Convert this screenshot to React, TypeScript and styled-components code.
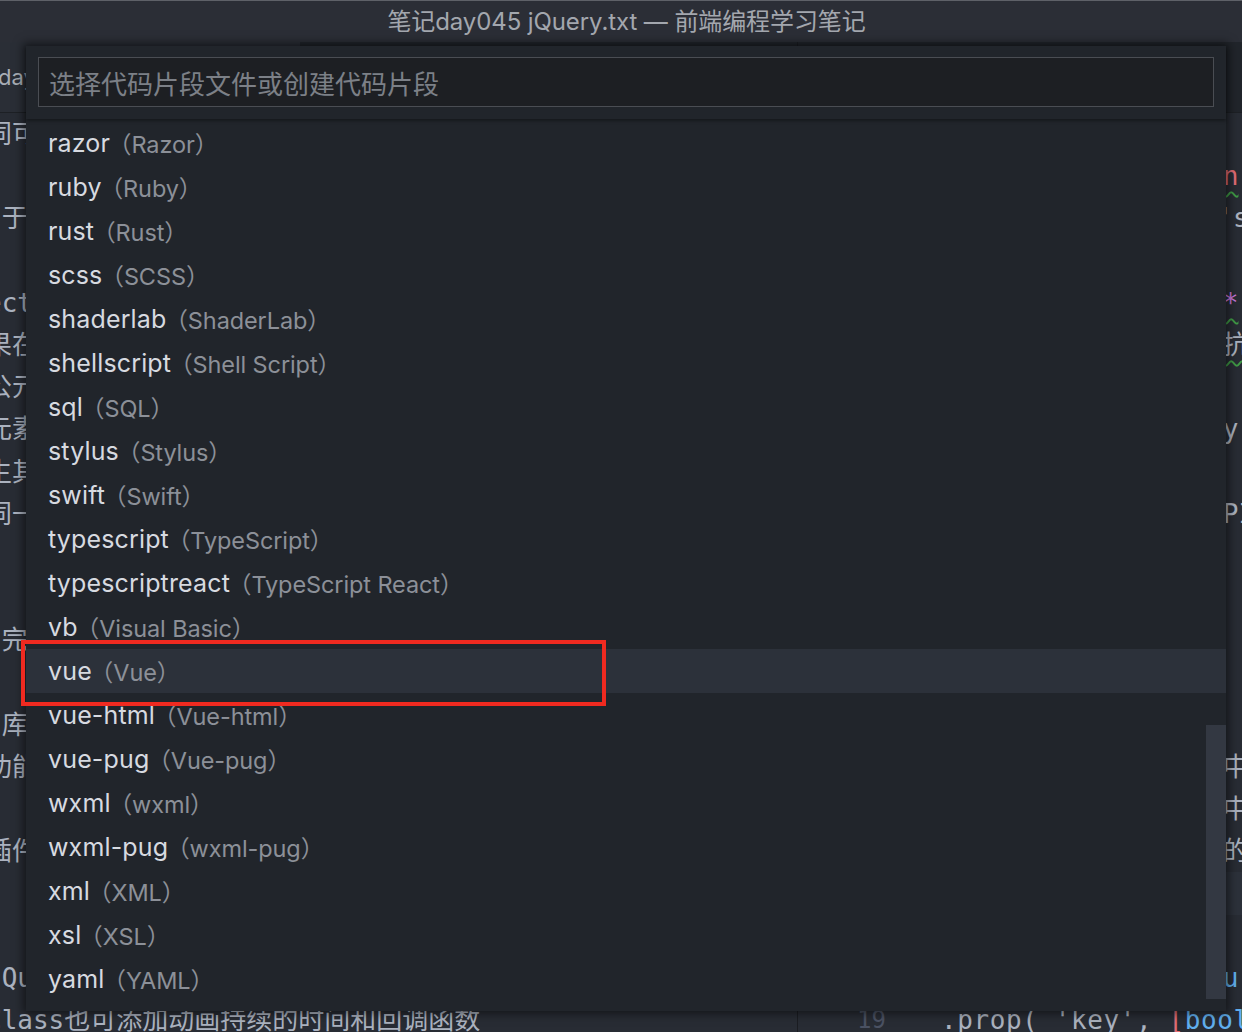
import React from 'react';
import styled, { createGlobalStyle } from 'styled-components';

const Global = createGlobalStyle`
  html, body { margin: 0; padding: 0; background: #282c34; overflow: hidden; }
  * { box-sizing: border-box; }
`;

const Window = styled.div`
  position: relative;
  width: 1242px;
  height: 1032px;
  overflow: hidden;
  background: #282c34;
  display: flex;
  flex-direction: column;
`;

const TitleBar = styled.div`
  height: 42px;
  flex: none;
  background: #2b2e36;
  border-top: 1px solid #5e6168;
  display: flex;
  align-items: center;
  justify-content: center;
  padding-bottom: 5px;
  padding-left: 11px;
`;

const Title = styled.span`
  font-family: Inter, "Noto Sans CJK SC", sans-serif;
  font-size: 24px;
  color: #a3a7ae;
  letter-spacing: -0.1px;
`;

const Workspace = styled.div`
  flex: 1;
  display: flex;
  min-height: 0;
`;

const Pane = styled.div<{ $width?: number; $divider?: boolean }>`
  ${p => (p.$width ? `width: ${p.$width}px; flex: none;` : 'flex: 1;')}
  ${p => (p.$divider ? 'border-left: 1px solid #1b1d22;' : '')}
  display: flex;
  flex-direction: column;
  overflow: hidden;
  min-width: 0;
`;

const TabBar = styled.div`
  height: 71px;
  flex: none;
  background: #21252b;
  display: flex;
  border-bottom: 1px solid #1d2025;
`;

const Tab = styled.div`
  background: #2a2e36;
  width: 300px;
  display: flex;
  align-items: center;
  font-family: Inter, "Noto Sans CJK SC", sans-serif;
  font-size: 22px;
  color: #a8adb5;
  white-space: nowrap;
  overflow: hidden;
`;

const TabLabel = styled.span`
  margin-left: -2px;
`;

const EditorBody = styled.div`
  flex: 1;
  display: flex;
  overflow: hidden;
`;

const Gutter = styled.div`
  width: 100px;
  flex: none;
  padding-right: 12px;
  font-family: "DejaVu Sans Mono", monospace;
  font-size: 24px;
  color: #4b5263;
  text-align: right;
`;

const Code = styled.div<{ $shift?: number }>`
  flex: 1;
  min-width: 0;
  margin-left: ${p => p.$shift ?? 0}px;
  font-family: "DejaVu Sans Mono", "Noto Sans CJK SC", monospace;
  font-size: 26px;
  color: #abb2bf;
`;

const Line = styled.div<{ $current?: boolean }>`
  height: 42.2px;
  line-height: 42.2px;
  white-space: pre;
  background: ${p => (p.$current ? '#2c313a' : 'transparent')};
`;

const Tok = styled.span<{ $c?: string; $squiggle?: boolean; $spacing?: number }>`
  color: ${p => p.$c ?? 'inherit'};
  ${p => (p.$spacing ? `letter-spacing: ${p.$spacing}px;` : '')}
  ${p =>
    p.$squiggle
      ? `text-decoration: underline wavy #3f9b45; text-decoration-thickness: 1.5px; text-underline-offset: 6px;`
      : ''}
`;

const Modal = styled.div`
  position: absolute;
  left: 26px;
  top: 46px;
  width: 1200px;
  height: 965px;
  background: #21252b;
  box-shadow: 0 0 9px 3px rgba(0, 0, 0, 0.5);
  display: flex;
  flex-direction: column;
`;

const ModalHeader = styled.div`
  height: 73px;
  flex: none;
  padding: 11px 12px 0 12px;
  box-shadow: 0 2px 3px rgba(0, 0, 0, 0.35);
  position: relative;
  z-index: 1;
`;

const SearchInput = styled.input`
  width: 100%;
  height: 50px;
  background: #1d1f23;
  border: 1.5px solid #4a4d53;
  outline: none;
  padding: 0 10px;
  font-family: "Noto Sans CJK SC", sans-serif;
  font-size: 26px;
  color: #d7dae0;
  &::placeholder {
    color: #7c8087;
  }
`;

const List = styled.div`
  padding-top: 2px;
  flex: 1;
  position: relative;
`;

const Row = styled.div<{ $selected?: boolean }>`
  height: 44px;
  display: flex;
  align-items: center;
  padding-left: 22px;
  background: ${p => (p.$selected ? '#2c313a' : 'transparent')};
  white-space: nowrap;
`;

const RowName = styled.span`
  font-family: Inter, "Noto Sans CJK SC", sans-serif;
  font-size: 25px;
  color: #d7dae0;
  letter-spacing: 0.15px;
`;

const RowDesc = styled.span`
  font-family: Inter, "Noto Sans CJK SC", sans-serif;
  font-size: 23.5px;
  color: #8c9098;
  margin-left: -2px;
  letter-spacing: -0.1px;
`;

const Scrollbar = styled.div`
  position: absolute;
  right: 0;
  top: 606px;
  width: 20px;
  height: 274px;
  background: #333842;
`;

const Annotation = styled.div`
  position: absolute;
  left: 21px;
  top: 640px;
  width: 585px;
  height: 66px;
  border: 4.5px solid #f02a20;
`;

const langs: [string, string][] = [
  ['razor', 'Razor'],
  ['ruby', 'Ruby'],
  ['rust', 'Rust'],
  ['scss', 'SCSS'],
  ['shaderlab', 'ShaderLab'],
  ['shellscript', 'Shell Script'],
  ['sql', 'SQL'],
  ['stylus', 'Stylus'],
  ['swift', 'Swift'],
  ['typescript', 'TypeScript'],
  ['typescriptreact', 'TypeScript React'],
  ['vb', 'Visual Basic'],
  ['vue', 'Vue'],
  ['vue-html', 'Vue-html'],
  ['vue-pug', 'Vue-pug'],
  ['wxml', 'wxml'],
  ['wxml-pug', 'wxml-pug'],
  ['xml', 'XML'],
  ['xsl', 'XSL'],
  ['yaml', 'YAML'],
];

const leftLines: string[] = [
  '同可',
  '',
  ' 于',
  '',
  'ect',
  '果在',
  '公元',
  '元素',
  '生其',
  '同一',
  '',
  '',
  ' 完',
  '',
  ' 库',
  '功能',
  '',
  '插件',
  '',
  '',
  'jQu',
  'Class也可添加动画持续的时间和回调函数',
];

const pad = (s: string) => (s + '                  ').slice(0, 18);

const rightLines: React.ReactNode[] = [
  'var box = $("#bo',
  <>{pad('$("div").functio')}<Tok $c="#e06c75" $squiggle>n</Tok></>,
  <>{'注' + pad("$(this).attr('i").slice(0, 16)}<Tok>'s</Tok></>,
  '',
  <>{pad('/* animate(prop) ')}<Tok $c="#c678dd" $squiggle>*</Tok></>,
  <>{pad(' * duration: time')}<Tok $squiggle>抗</Tok></>,
  '',
  <>{pad('  $(".box").eas')}<Tok>y</Tok></>,
  '',
  <>{pad('// jQuery core A')}<Tok>PI</Tok></>,
  '',
  '',
  '',
  '',
  '',
  <>{pad('// plugin')}<Tok>中</Tok></>,
  <>{pad('// animate')}<Tok>中</Tok></>,
  <>{pad('// callback')}<Tok>的</Tok></>,
  '',
  '',
  <>{pad('  .animate({ width')}<Tok $c="#61afef">u</Tok></>,
  <Tok $spacing={0.6}>
    .prop( 'key', <Tok $c="#e06c75">[</Tok><Tok $c="#61afef">boolean</Tok>] )
  </Tok>,
];

export default function App() {
  return (
    <>
      <Global />
      <Window>
        <TitleBar>
          <Title>笔记day045 jQuery.txt — 前端编程学习笔记</Title>
        </TitleBar>
        <Workspace>
          <Pane $width={797}>
            <TabBar>
              <Tab>
                <TabLabel>day045 jQuery.txt</TabLabel>
              </Tab>
            </TabBar>
            <EditorBody>
              <Code $shift={-14}>
                {leftLines.map((l, i) => (
                  <Line key={i}>{l}</Line>
                ))}
              </Code>
            </EditorBody>
          </Pane>
          <Pane $divider>
            <TabBar />
            <EditorBody>
              <Gutter>
                {rightLines.map((_, i) => (
                  <Line key={i}>{i >= 3 ? i - 2 : ''}</Line>
                ))}
              </Gutter>
              <Code $shift={43}>
                {rightLines.map((l, i) => (
                  <Line key={i} $current={i === 18}>
                    {l}
                  </Line>
                ))}
              </Code>
            </EditorBody>
          </Pane>
        </Workspace>

        <Modal>
          <ModalHeader>
            <SearchInput placeholder="选择代码片段文件或创建代码片段" />
          </ModalHeader>
          <List>
            {langs.map(([name, desc]) => (
              <Row key={name} $selected={name === 'vue'}>
                <RowName>{name}</RowName>
                <RowDesc>（{desc}）</RowDesc>
              </Row>
            ))}
            <Scrollbar />
          </List>
        </Modal>
        <Annotation />
      </Window>
    </>
  );
}
